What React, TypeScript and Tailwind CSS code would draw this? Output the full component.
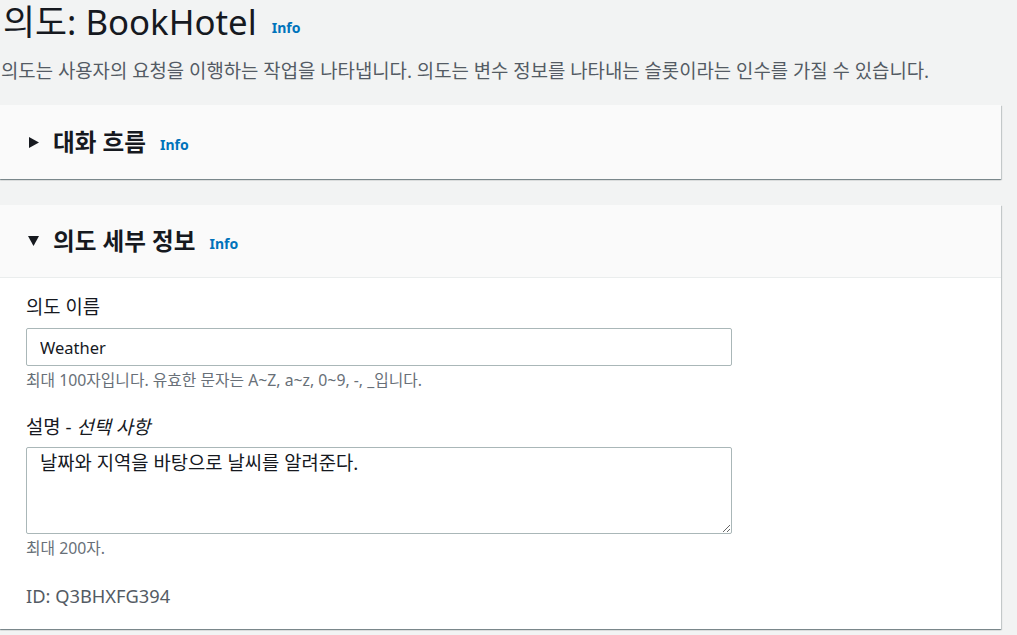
const font = { fontFamily: '"Noto Sans", "Noto Sans CJK KR", sans-serif' };

const InfoLink = ({ className = '' }: { className?: string }) => (
  <a className={`text-[14px] font-bold text-[#0073bb] ${className}`}>Info</a>
);

const Caret = ({ open }: { open: boolean }) =>
  open ? (
    <svg width="11" height="10" viewBox="0 0 11 10" className="shrink-0">
      <polygon points="0,0 11,0 5.5,10" fill="#16191f" />
    </svg>
  ) : (
    <svg width="10" height="11" viewBox="0 0 10 11" className="shrink-0">
      <polygon points="0,0 10,5.5 0,11" fill="#16191f" />
    </svg>
  );

const cardShadow =
  'shadow-[0_1px_1px_0_rgba(0,28,36,0.3),1px_1px_1px_0_rgba(0,28,36,0.15),-1px_1px_1px_0_rgba(0,28,36,0.15)]';

export default function App() {
  return (
    <div className="min-h-screen bg-[#f2f3f3] text-[#16191f]" style={font}>
      <div className="mr-[16px]">
        {/* Page header */}
        <div className="flex h-[44px] items-center gap-[15px] pl-[3px]">
          <h1 className="text-[34.8px] leading-[44px] font-normal">의도: BookHotel</h1>
          <InfoLink className="mt-[10px]" />
        </div>
        <p className="mt-[14px] pl-[1px] text-[18.85px] leading-[26px] text-[#545b64]">
          의도는 사용자의 요청을 이행하는 작업을 나타냅니다. 의도는 변수 정보를 나타내는 슬롯이라는 인수를 가질 수 있습니다.
        </p>

        {/* Conversation flow */}
        <section className={`mt-[21px] bg-[#fafafa] ${cardShadow}`}>
          <div className="flex h-[74px] items-center pl-[29px]">
            <Caret open={false} />
            <h2 className="ml-[14px] text-[23.6px] font-bold leading-[30px]">대화 흐름</h2>
            <InfoLink className="ml-[14px] mt-[4px]" />
          </div>
        </section>

        {/* Intent details */}
        <section className={`mt-[26px] bg-white ${cardShadow}`}>
          <div className="flex h-[73px] items-center border-b border-[#eaeded] bg-[#fafafa] pl-[28px]">
            <Caret open={true} />
            <h2 className="ml-[14px] text-[23.6px] font-bold leading-[30px]">의도 세부 정보</h2>
            <InfoLink className="ml-[14px] mt-[4px]" />
          </div>
          <div className="pl-[26px] pt-[16px] pb-[20px]">
            <label className="block text-[18.8px] leading-[26px]">의도 이름</label>
            <input
              defaultValue="Weather"
              className="mt-[8px] block h-[38px] w-[706px] rounded-[2px] border border-[#aab7b8] bg-white px-[13px] text-[16.5px] text-[#16191f] outline-none"
              style={font}
            />
            <p className="mt-[4px] text-[15.8px] leading-[20px] text-[#687078]">
              최대 100자입니다. 유효한 문자는 A~Z, a~z, 0~9, -, _입니다.
            </p>

            <label className="mt-[24px] block text-[18.8px] leading-[26px]">
              설명 - <i>선택 사항</i>
            </label>
            <textarea
              defaultValue="날짜와 지역을 바탕으로 날씨를 알려준다."
              className="mt-[7px] block h-[87px] w-[706px] rounded-[2px] border border-[#aab7b8] bg-white px-[13px] pt-[2px] text-[18.8px] leading-[26px] text-[#16191f] outline-none"
              style={font}
            />
            <p className="mt-[4px] text-[15.8px] leading-[20px] text-[#687078]">최대 200자.</p>

            <p className="mt-[25px] text-[18.3px] leading-[26px] text-[#545b64]">ID: Q3BHXFG394</p>
          </div>
        </section>
      </div>
    </div>
  );
}
